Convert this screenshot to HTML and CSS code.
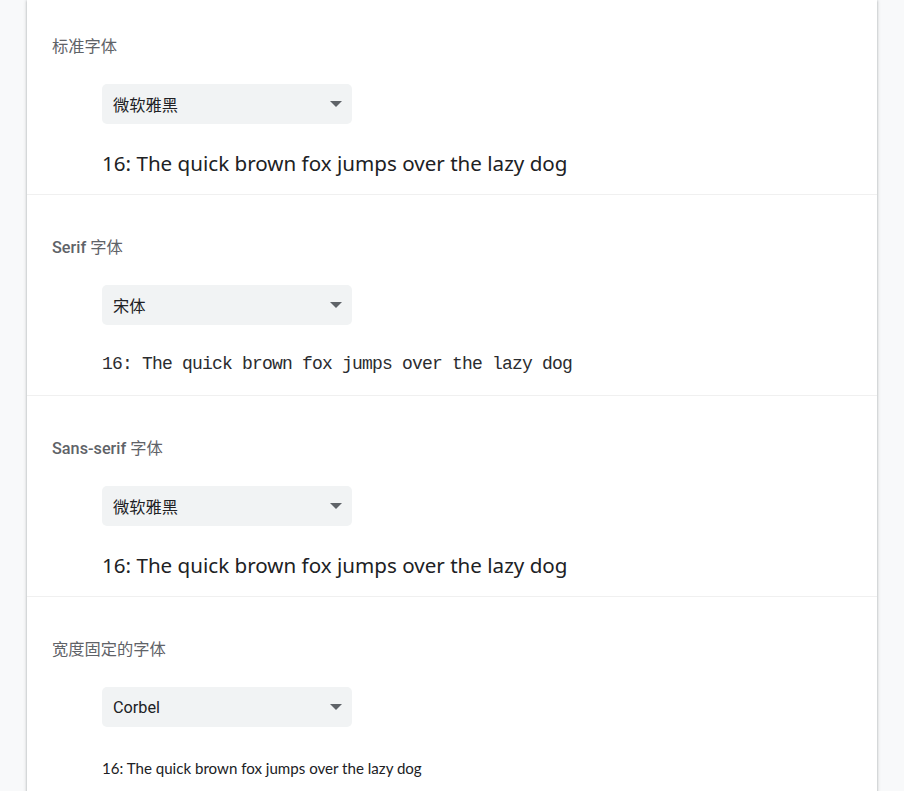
FILE: index.html
```html
<!DOCTYPE html>
<html lang="zh-CN">
<head>
<meta charset="utf-8">
<title>自定义字体</title>
<link rel="stylesheet" href="styles.css">
</head>
<body>
<main class="page">
  <div class="card">
    <section class="row">
      <div class="label">标准字体</div>
      <div class="control">
        <div class="select" role="combobox"><span>微软雅黑</span><svg class="arrow" width="12" height="6" viewBox="0 0 12 6"><path d="M0 0H12L6 6Z"/></svg></div>
        <div class="sample sample-sans">16: The quick brown fox jumps over the lazy dog</div>
      </div>
    </section>
    <section class="row">
      <div class="label"><span class="latin">Serif</span> 字体</div>
      <div class="control">
        <div class="select" role="combobox"><span>宋体</span><svg class="arrow" width="12" height="6" viewBox="0 0 12 6"><path d="M0 0H12L6 6Z"/></svg></div>
        <div class="sample sample-serif">16: The quick brown fox jumps over the lazy dog</div>
      </div>
    </section>
    <section class="row">
      <div class="label"><span class="latin">Sans-serif</span> 字体</div>
      <div class="control">
        <div class="select" role="combobox"><span>微软雅黑</span><svg class="arrow" width="12" height="6" viewBox="0 0 12 6"><path d="M0 0H12L6 6Z"/></svg></div>
        <div class="sample sample-sans">16: The quick brown fox jumps over the lazy dog</div>
      </div>
    </section>
    <section class="row">
      <div class="label">宽度固定的字体</div>
      <div class="control">
        <div class="select" role="combobox"><span>Corbel</span><svg class="arrow" width="12" height="6" viewBox="0 0 12 6"><path d="M0 0H12L6 6Z"/></svg></div>
        <div class="sample sample-fixed">16: The quick brown fox jumps over the lazy dog</div>
      </div>
    </section>
  </div>
</main>
</body>
</html>
```
FILE: styles.css
```css
html, body {
  margin: 0;
  padding: 0;
}
body {
  background: #f8f9fa;
  font-family: Roboto, "Noto Sans CJK SC", sans-serif;
  color: #202124;
}
.page {
  display: flex;
  justify-content: center;
}
.card {
  width: 850px;
  background: #ffffff;
  box-shadow: 0 1px 2px rgba(60, 64, 67, 0.3), 0 1px 3px 1px rgba(60, 64, 67, 0.15);
}
.row {
  height: 201px;
  box-sizing: border-box;
  padding: 41px 0 0 25px;
  border-bottom: 1px solid #f0f0f0;
}
.row:first-child {
  height: 195px;
  padding-top: 35px;
}
.label {
  font-size: 16.25px;
  line-height: 24px;
  font-weight: 400;
  color: #5f6368;
}
.label .latin {
  font-weight: 500;
}
.control {
  padding-left: 50px;
}
.select {
  margin-top: 25px;
  width: 250px;
  height: 40px;
  box-sizing: border-box;
  padding: 0 10px 0 11px;
  border-radius: 5px;
  background: #f1f3f4;
  display: flex;
  align-items: center;
  justify-content: space-between;
  font-size: 16.25px;
  color: #202124;
}
.arrow {
  fill: #5f6368;
  margin-top: -1px;
}
.sample {
  margin-top: 24px;
  height: 30px;
  line-height: 30px;
  white-space: nowrap;
  color: #202124;
}
.sample-sans {
  font-family: "Noto Sans", "Noto Sans CJK SC", sans-serif;
  font-size: 20.6px;
}
.sample-serif {
  font-family: "Liberation Mono", monospace;
  font-size: 18px;
  letter-spacing: -0.8px;
  color: #2b2c2f;
}
.sample-fixed {
  font-family: Lato, sans-serif;
  font-size: 15.1px;
  padding-top: 2px;
}
```
